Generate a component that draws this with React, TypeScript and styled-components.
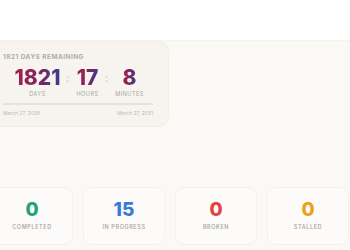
import styled, { createGlobalStyle } from 'styled-components';

const GlobalStyle = createGlobalStyle`
  html, body {
    margin: 0;
    padding: 0;
    background: #fbf9f6;
    font-family: Inter, "Noto Sans", sans-serif;
    overflow: hidden;
  }
`;

const Header = styled.header`
  height: 40px;
  background: #ffffff;
  border-bottom: 1px solid #f6f3ef;
`;

const Main = styled.main`
  margin-left: -9px;
  padding-top: 1px;
  display: flex;
  flex-direction: column;
  gap: 61px;
`;

const CountdownCard = styled.section`
  width: 177px;
  height: 84px;
  box-sizing: border-box;
  padding: 11px 15px 0 12px;
  background: #f7f4f0;
  border-radius: 10px;
  box-shadow: 0 0 0 1px #f2eee9;
`;

const Caption = styled.div`
  font-size: 6.5px;
  font-weight: 700;
  letter-spacing: 0.45px;
  color: #b0aca8;
  line-height: 8px;
`;

const Timer = styled.div`
  display: flex;
  align-items: flex-start;
  padding-left: 12px;
  margin-top: 5px;
`;

const Unit = styled.div<{ $w: number }>`
  width: ${(p) => p.$w}px;
  display: flex;
  flex-direction: column;
  align-items: center;
`;

const Big = styled.span`
  font-size: 21px;
  font-weight: 800;
  line-height: 24px;
  background: linear-gradient(90deg, #a81f47 0%, #7b2560 55%, #3c3c8e 100%);
  -webkit-background-clip: text;
  background-clip: text;
  color: transparent;
`;

const UnitLabel = styled.span`
  font-size: 5.5px;
  font-weight: 400;
  letter-spacing: 0.5px;
  color: #a9a5a1;
  line-height: 8px;
`;

const Colon = styled.span<{ $w: number }>`
  width: ${(p) => p.$w}px;
  text-align: center;
  font-size: 11px;
  font-weight: 600;
  color: #d4d0cb;
  line-height: 24px;
`;

const Track = styled.div`
  height: 2px;
  width: 150px;
  margin-top: 5px;
  background: #e6e2dd;
  border-radius: 1px;
`;

const Dates = styled.div`
  width: 150px;
  display: flex;
  justify-content: space-between;
  margin-top: 5px;
  font-size: 5px;
  color: #bdb9b5;
`;

const StatRow = styled.div`
  display: grid;
  grid-template-columns: repeat(4, 82px);
  gap: 10px;
`;

const StatCard = styled.div`
  height: 58px;
  box-sizing: border-box;
  padding-top: 11px;
  background: #fcfbf9;
  border: 1px solid #f4f1ec;
  border-radius: 9px;
  display: flex;
  flex-direction: column;
  align-items: center;
`;

const StatValue = styled.span<{ $color: string }>`
  font-size: 19px;
  font-weight: 800;
  line-height: 22px;
  color: ${(p) => p.$color};
`;

const StatLabel = styled.span`
  margin-top: 3px;
  font-size: 5.5px;
  font-weight: 500;
  letter-spacing: 0.6px;
  color: #a29e9a;
`;

const stats = [
  { value: '0', label: 'COMPLETED', color: '#1fa37a' },
  { value: '15', label: 'IN PROGRESS', color: '#3b78d8' },
  { value: '0', label: 'BROKEN', color: '#e0453f' },
  { value: '0', label: 'STALLED', color: '#eaa21c' },
];

export default function App() {
  return (
    <>
      <GlobalStyle />
      <Header />
      <Main>
        <CountdownCard>
          <Caption>1821 DAYS REMAINING</Caption>
          <Timer>
            <Unit $w={45}>
              <Big>1821</Big>
              <UnitLabel>DAYS</UnitLabel>
            </Unit>
            <Colon $w={15}>:</Colon>
            <Unit $w={25}>
              <Big>17</Big>
              <UnitLabel>HOURS</UnitLabel>
            </Unit>
            <Colon $w={13}>:</Colon>
            <Unit $w={33}>
              <Big>8</Big>
              <UnitLabel>MINUTES</UnitLabel>
            </Unit>
          </Timer>
          <Track />
          <Dates>
            <span>March 27, 2026</span>
            <span>March 27, 2031</span>
          </Dates>
        </CountdownCard>
        <StatRow>
          {stats.map((s) => (
            <StatCard key={s.label}>
              <StatValue $color={s.color}>{s.value}</StatValue>
              <StatLabel>{s.label}</StatLabel>
            </StatCard>
          ))}
        </StatRow>
      </Main>
    </>
  );
}
